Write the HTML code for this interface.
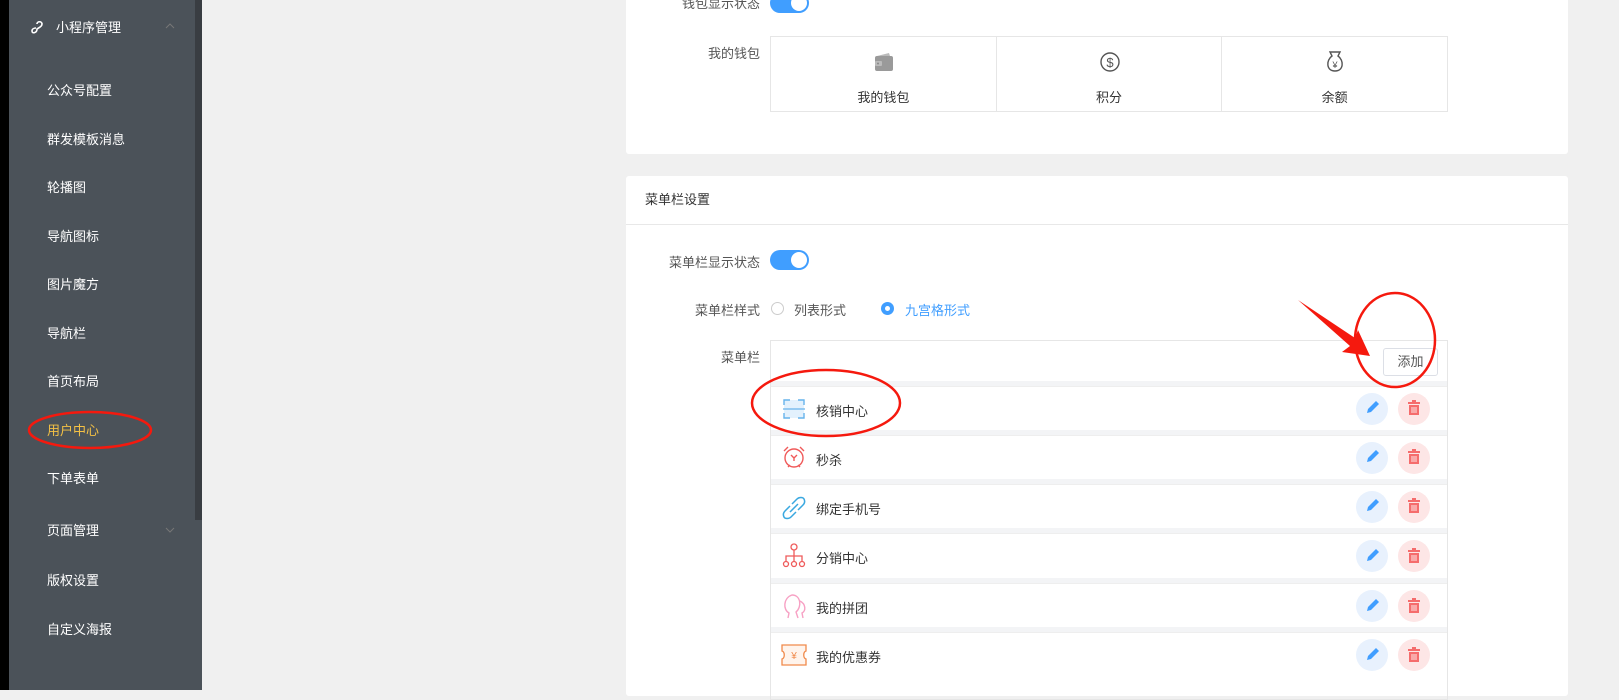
<!DOCTYPE html>
<html><head><meta charset="utf-8"><style>
*{margin:0;padding:0;box-sizing:border-box}
body{width:1619px;height:690px;overflow:hidden;background:#f0f0f0;font-family:"Liberation Sans","Noto Sans CJK SC",sans-serif;font-size:13px;color:#333;position:relative}
.a{position:absolute}
.side{left:9px;top:0;width:193px;height:690px;background:#4b5259}
.sb{left:195px;top:0;width:7px;height:520px;background:#393d42}
.mi{left:47px;color:#fff;font-size:13px;line-height:16px}
.card{background:#fff;border-radius:3px}
.lbl{color:#555;text-align:right;width:140px;left:620px}
.sw{width:39px;height:20px;border-radius:10px;background:#409eff}
.sw::after{content:"";position:absolute;right:2px;top:2px;width:16px;height:16px;border-radius:50%;background:#fff}
.row{left:771px;width:676px;height:44px;background:#fff;border-top:1px solid #eee}
.gap{left:771px;width:676px;height:5px;background:#f3f4f6}
.rt{left:45px;top:14px;font-size:13px;color:#333}
.bt{width:32px;height:32px;border-radius:50%;top:6px}
.ed{left:585px;background:#e8f1fd}
.dl{left:627px;background:#fde6e6}
</style></head><body>
<div class="a" style="left:0;top:0;width:9px;height:690px;background:#000"></div>
<div class="a side"></div>
<div class="a sb"></div>
<svg class="a" style="left:30px;top:20px" width="14" height="16" viewBox="0 0 14 16"><path d="M7 4 C7 1 12 1 12 4 C12 7 8 8 7 9 C7 13 2 14 2 11 C2 9 4 8 6 8" fill="none" stroke="#fff" stroke-width="1.6"/></svg>
<div class="a mi" style="left:56px;top:20px">小程序管理</div>
<svg class="a" style="left:165px;top:23px" width="10" height="6"><path d="M1 5 L5 1 L9 5" fill="none" stroke="#777" stroke-width="1"/></svg>
<div class="a mi" style="top:83px">公众号配置</div>
<div class="a mi" style="top:132px">群发模板消息</div>
<div class="a mi" style="top:180px">轮播图</div>
<div class="a mi" style="top:229px">导航图标</div>
<div class="a mi" style="top:277px">图片魔方</div>
<div class="a mi" style="top:326px">导航栏</div>
<div class="a mi" style="top:374px">首页布局</div>
<div class="a mi" style="top:423px;color:#f4c145">用户中心</div>
<div class="a mi" style="top:471px">下单表单</div>
<div class="a mi" style="top:523px">页面管理</div>
<svg class="a" style="left:165px;top:527px" width="10" height="6"><path d="M1 1 L5 5 L9 1" fill="none" stroke="#777" stroke-width="1"/></svg>
<div class="a mi" style="top:573px">版权设置</div>
<div class="a mi" style="top:622px">自定义海报</div>

<div class="a card" style="left:626px;top:-10px;width:942px;height:164px"></div>
<div class="a lbl" style="top:-7px">钱包显示状态</div>
<div class="a sw" style="left:770px;top:-7px"></div>
<div class="a lbl" style="top:43px">我的钱包</div>
<div class="a" style="left:770px;top:36px;width:678px;height:76px;border:1px solid #e6e6e6;display:flex">
 <div style="flex:1;border-right:1px solid #e6e6e6;text-align:center;position:relative"><svg style="position:absolute;left:103px;top:16px" width="20" height="19"><rect x="1" y="3" width="18" height="15" rx="2" fill="#9a9a9a"/><path d="M3 3 L15 0 L16 3" fill="#bbb"/><rect x="1" y="8" width="7" height="5" rx="1" fill="#bbb"/><circle cx="4" cy="10.5" r="1" fill="#888"/></svg><div style="position:absolute;top:50px;width:100%">我的钱包</div></div>
 <div style="flex:1;border-right:1px solid #e6e6e6;position:relative;text-align:center"><svg style="position:absolute;left:103px;top:15px" width="20" height="20"><circle cx="10" cy="10" r="9" fill="none" stroke="#555" stroke-width="1.4"/><text x="10" y="15" font-size="13" text-anchor="middle" fill="#555" font-family="Liberation Sans">$</text></svg><div style="position:absolute;top:50px;width:100%">积分</div></div>
 <div style="flex:1;position:relative;text-align:center"><svg style="position:absolute;left:103px;top:14px" width="20" height="22"><path d="M7 5 L5 1 L15 1 L13 5 C19 9 19 20 10 20 C1 20 1 9 7 5Z" fill="none" stroke="#555" stroke-width="1.4"/><text x="10" y="17" font-size="9" text-anchor="middle" fill="#555">¥</text></svg><div style="position:absolute;top:50px;width:100%">余额</div></div>
</div>

<div class="a card" style="left:626px;top:176px;width:942px;height:520px"></div>
<div class="a" style="left:645px;top:189px;font-size:13px;color:#333">菜单栏设置</div>
<div class="a" style="left:626px;top:224px;width:942px;height:1px;background:#e8e8e8"></div>
<div class="a lbl" style="top:252px">菜单栏显示状态</div>
<div class="a sw" style="left:770px;top:250px"></div>
<div class="a lbl" style="top:300px">菜单栏样式</div>
<div class="a" style="left:771px;top:302px;width:13px;height:13px;border:1px solid #ccc;border-radius:50%"></div>
<div class="a" style="left:794px;top:300px;color:#555">列表形式</div>
<div class="a" style="left:881px;top:302px;width:13px;height:13px;background:#409eff;border-radius:50%"><div style="margin:4px;width:5px;height:5px;border-radius:50%;background:#fff"></div></div>
<div class="a" style="left:905px;top:300px;color:#409eff">九宫格形式</div>
<div class="a lbl" style="top:347px">菜单栏</div>
<div class="a" style="left:770px;top:340px;width:678px;height:360px;border:1px solid #e6e6e6"></div>
<div class="a" style="left:1383px;top:348px;width:55px;height:28px;border:1px solid #dcdfe6;border-radius:3px;text-align:center;line-height:26px;color:#555;background:#fff">添加</div>

<div class="a gap" style="top:381px"></div>
<div class="a row" style="top:386px"><svg class="a" style="left:11px;top:10px" width="24" height="24"><rect x="2" y="3" width="20" height="18" fill="#e3f1fd"/><path d="M2 8V3H8M16 3H22V8M2 16V21H8M16 21H22V16" fill="none" stroke="#67b4ec" stroke-width="1.4"/><path d="M1 12H23" stroke="#67b4ec" stroke-width="1.2"/></svg><div class="a rt">核销中心</div><div class="a bt ed"></div><div class="a bt dl"></div></div>
<div class="a gap" style="top:430px"></div>
<div class="a row" style="top:435px"><svg class="a" style="left:11px;top:9px" width="24" height="24"><circle cx="12" cy="13" r="9" fill="none" stroke="#f05a5a" stroke-width="1.4"/><path d="M2 6 L6 2 M22 6 L18 2 M9 10 L12 13 L15 10 M12 13 V16 M6 22 L8 20 M18 22 L16 20" stroke="#f05a5a" stroke-width="1.4" fill="none"/></svg><div class="a rt">秒杀</div><div class="a bt ed"></div><div class="a bt dl"></div></div>
<div class="a gap" style="top:479px"></div>
<div class="a row" style="top:484px"><svg class="a" style="left:10px;top:10px" width="26" height="26"><path d="M11 9 L16 4 C18 2 22 2 23 4 C24 6 24 8 22 10 L17 15 M15 17 L10 22 C8 24 4 24 3 22 C2 20 2 18 4 16 L9 11 M9 17 L17 9" fill="none" stroke="#3aa8e0" stroke-width="1.5"/></svg><div class="a rt">绑定手机号</div><div class="a bt ed"></div><div class="a bt dl"></div></div>
<div class="a gap" style="top:528px"></div>
<div class="a row" style="top:533px"><svg class="a" style="left:10px;top:9px" width="26" height="26"><circle cx="13" cy="4" r="3" fill="none" stroke="#ef5b5b" stroke-width="1.3"/><path d="M13 7V12M5 18V13H21V18M13 12V18" stroke="#ef5b5b" stroke-width="1.3" fill="none"/><circle cx="5" cy="21" r="2.5" fill="none" stroke="#ef5b5b" stroke-width="1.3"/><circle cx="13" cy="21" r="2.5" fill="none" stroke="#ef5b5b" stroke-width="1.3"/><circle cx="21" cy="21" r="2.5" fill="none" stroke="#ef5b5b" stroke-width="1.3"/></svg><div class="a rt">分销中心</div><div class="a bt ed"></div><div class="a bt dl"></div></div>
<div class="a gap" style="top:578px"></div>
<div class="a row" style="top:583px"><svg class="a" style="left:10px;top:8px" width="26" height="28"><path d="M7 26 L8 21 C2 18 2 6 11 3 C20 3 21 15 15 20 L17 26 M19 9 C25 12 25 19 21 21 L22 26" fill="none" stroke="#f7a1c4" stroke-width="1.4"/></svg><div class="a rt">我的拼团</div><div class="a bt ed"></div><div class="a bt dl"></div></div>
<div class="a gap" style="top:627px"></div>
<div class="a row" style="top:632px"><svg class="a" style="left:10px;top:10px" width="26" height="24"><path d="M1 2H25V8C22 9 22 15 25 16V22H1V16C4 15 4 9 1 8Z" fill="#fff4ec" stroke="#f08a4b" stroke-width="1.3"/><text x="13" y="16" font-size="10" text-anchor="middle" fill="#f08a4b">¥</text></svg><div class="a rt">我的优惠券</div><div class="a bt ed"></div><div class="a bt dl"></div></div>

<svg class="a" style="left:0;top:0" width="1619" height="690">
<defs>
<g id="pen"><path d="M-6 6 L-5 2 L3 -6 L6 -3 L-2 5Z" fill="#409eff"/></g>
<g id="bin"><rect x="-6" y="-6" width="12" height="2" fill="#f56c6c"/><rect x="-2" y="-8" width="4" height="2" fill="#f56c6c"/><path d="M-5 -3H5V7H-5Z" fill="#f56c6c"/><path d="M-2 -1V5M0 -1V5M2 -1V5" stroke="#fde6e6" stroke-width="1"/></g>
</defs>
<use href="#pen" x="1373" y="407"/><use href="#bin" x="1414" y="408"/>
<use href="#pen" x="1373" y="456"/><use href="#bin" x="1414" y="457"/>
<use href="#pen" x="1373" y="505"/><use href="#bin" x="1414" y="506"/>
<use href="#pen" x="1373" y="555"/><use href="#bin" x="1414" y="556"/>
<use href="#pen" x="1373" y="605"/><use href="#bin" x="1414" y="606"/>
<use href="#pen" x="1373" y="654"/><use href="#bin" x="1414" y="655"/>
<g fill="none" stroke="#f5190e" stroke-width="2.5">
<ellipse cx="90" cy="430" rx="61" ry="18"/>
<ellipse cx="826" cy="403" rx="74" ry="33"/>
<ellipse cx="1395" cy="340" rx="40" ry="47"/>
</g>
<path d="M1298 300 L1355 338 L1358 330 L1370 356 L1342 352 L1350 346 Z" fill="#f5190e"/>
</svg>
</body></html>
